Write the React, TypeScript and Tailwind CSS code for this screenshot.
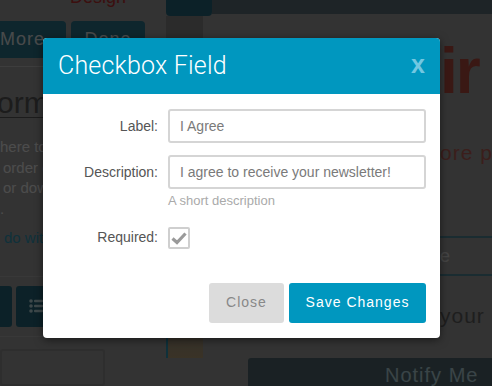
export default function App() {
  return (
    <div className="relative w-[492px] h-[386px] overflow-hidden bg-[#aaaaaa] font-['Liberation_Sans',Arial,sans-serif]">
      {/* page underneath the modal */}
      <div className="flex h-full">
        {/* left column */}
        <div className="w-[166px] shrink-0 flex flex-col">
          <div className="h-[21px] -mt-[16px] pl-[70px] text-[18px] text-[#c83232]">Design</div>
          <div className="flex gap-[5px] mt-[16px]">
            <div className="w-[66px] h-[37px] rounded-r-[4px] bg-[#2f7f96] text-[#f0f8fa] text-[18px] tracking-[1px] flex items-center">More</div>
            <div className="w-[74px] h-[37px] rounded-[4px] bg-[#2f7f96] text-[#f0f8fa] text-[18px] tracking-[1px] flex items-center justify-center">Done</div>
          </div>
          <div className="mt-[8px] w-[150px] border-t border-[#cccccc]" />
          <div className="mt-[18px] text-[30px] leading-[36px] text-[#5e5e5e] underline decoration-1 underline-offset-[4px] -ml-[3px]">orm</div>
          <div className="mt-[16px] text-[15px] leading-[20.5px] text-white whitespace-nowrap">
            <div>here to add</div>
            <div className="pl-[3px]">order cols</div>
            <div className="pl-[3px]">or down</div>
            <div>.</div>
          </div>
          <div className="mt-[8px] pl-[4px] text-[15px] text-[#35a3c5] whitespace-nowrap">do with</div>
          <div className="mt-[26px] w-[135px] border-t border-[#bbbbbb]" />
          <div className="flex gap-[4px] mt-[9px]">
            <div className="w-[12px] h-[41px] rounded-r-[3px] bg-[#2b7185]" />
            <div className="w-[40px] h-[41px] rounded-[3px] bg-[#2b7185] flex items-center justify-center">
              <svg width="16" height="16" viewBox="0 0 16 16" fill="#d0f0f8">
                <circle cx="3" cy="3" r="1.8" />
                <circle cx="3" cy="8" r="1.8" />
                <circle cx="3" cy="13" r="1.8" />
                <rect x="6" y="1.8" width="9" height="2.4" rx="1" />
                <rect x="6" y="6.8" width="9" height="2.4" rx="1" />
                <rect x="6" y="11.8" width="9" height="2.4" rx="1" />
              </svg>
            </div>
          </div>
          <div className="mt-[9px] w-[135px] border-t border-[#bbbbbb]" />
          <div className="mt-[12px] w-[105px] h-[40px] rounded-[3px] border-2 border-[#9a9a9a]" />
        </div>

        {/* right column */}
        <div className="flex-1 flex flex-col">
          <div className="flex">
            <div className="w-[46px] h-[16px] rounded-b-[4px] bg-[#2b7185] shrink-0" />
            <div className="flex-1 h-[14px] bg-[#647b82]" />
          </div>
          <div className="w-[37px] h-[22px] bg-[#8f8f8f]" />
          <div className="flex-1 flex">
            <div className="w-[37px] shrink-0 flex flex-col">
              <div className="flex-1" />
              <div className="h-[50px] border-l-2 border-[#35a3c5] bg-gradient-to-b from-[#9a9a9a] to-[#c2aa80]" />
            </div>
            <div className="flex-1 flex flex-col pl-[237px] whitespace-nowrap">
              <div className="mt-[-2px] text-[64px] leading-[70px] text-[#c15043] font-bold tracking-[-2px]">ir</div>
              <div className="mt-[34px] text-[21px] leading-[26px] text-[#c5675d] tracking-[1px]">ore p</div>
              <div className="mt-[70px] -ml-[40px] h-[40px] border-y-2 border-[#5793a3] pl-[40px] text-[18px] leading-[36px] text-[#e3e3e3]">e</div>
              <div className="mt-[27px] text-[21px] leading-[26px] text-[#676767] tracking-[1px]">your</div>
            </div>
          </div>
          <div className="h-[28px] ml-[82px] rounded-tl-[3px] bg-[#577178] text-[20px] text-[#c1e3ed] pl-[137px] pt-[2px] tracking-[1px] whitespace-nowrap">Notify Me</div>
        </div>
      </div>

      {/* backdrop */}
      <div className="absolute inset-0 bg-black/70" />

      {/* modal */}
      <div className="absolute left-[43px] top-[38px] w-[397px] bg-white rounded-[4px] shadow-[0_2px_8px_rgba(0,0,0,0.5)] overflow-hidden">
        <div className="h-[56px] bg-[#0097bf] flex items-center justify-between pl-[15px] pr-[15px]">
          <div className="text-[25px] text-white font-['Roboto',sans-serif] font-light tracking-[0.2px]">Checkbox Field</div>
          <div className="text-[25px] font-bold text-[#72c7e1] leading-none -mt-[4px]">x</div>
        </div>
        <div className="pt-[15px] pl-[15px] pr-[14px] pb-[15px] text-[14px]">
          <div className="flex items-center gap-[10px]">
            <div className="w-[100px] text-right text-[#555]">Label:</div>
            <div className="flex-1 h-[34px] border-2 border-[#d5d5d5] rounded-[3px] pl-[10px] flex items-center text-[#7a7a7a]">I Agree</div>
          </div>
          <div className="flex items-center gap-[10px] mt-[12px]">
            <div className="w-[100px] text-right text-[#555]">Description:</div>
            <div className="flex-1 h-[34px] border-2 border-[#d5d5d5] rounded-[3px] pl-[10px] flex items-center text-[#7a7a7a]">I agree to receive your newsletter!</div>
          </div>
          <div className="ml-[110px] mt-[2px] text-[13px] text-[#aaa]">A short description</div>
          <div className="flex items-center gap-[10px] mt-[16px]">
            <div className="w-[100px] text-right text-[#555]">Required:</div>
            <div className="w-[22px] h-[22px] border-2 border-[#cfcfcf] rounded-[2px] flex items-center justify-center">
              <svg width="16" height="14" viewBox="0 0 16 14">
                <path d="M1.5 7.5 L6 11.5 L14.5 2.5" fill="none" stroke="#9a9a9a" strokeWidth="3.2" />
              </svg>
            </div>
          </div>
          <div className="flex justify-end gap-[5px] mt-[34px]">
            <div className="w-[75px] h-[40px] rounded-[3px] bg-[#dcdcdc] text-[#888] tracking-[1px] flex items-center justify-center">Close</div>
            <div className="w-[137px] h-[40px] rounded-[3px] bg-[#0097bf] text-white tracking-[1px] flex items-center justify-center">Save Changes</div>
          </div>
        </div>
      </div>
    </div>
  )
}
